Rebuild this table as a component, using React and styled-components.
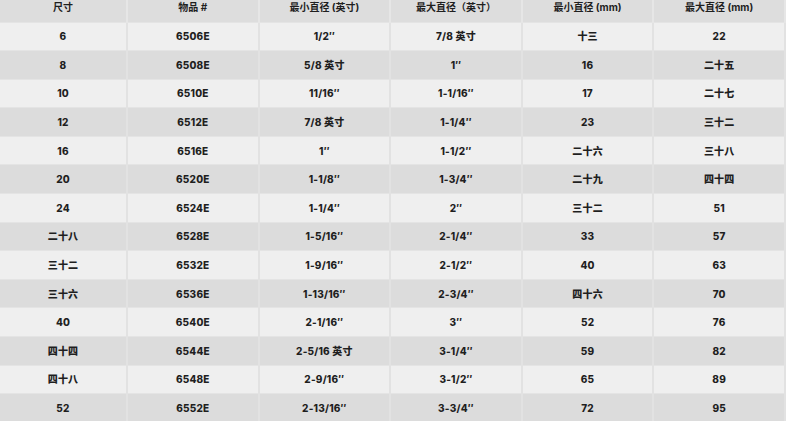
import styled, { createGlobalStyle } from "styled-components";

const GlobalStyle = createGlobalStyle`
  body {
    margin: 0;
    background: #ffffff;
    font-family: Inter, "Noto Sans CJK SC", sans-serif;
  }
`;

const headers = [
  "尺寸",
  "物品 #",
  "最小直径 (英寸)",
  "最大直径（英寸）",
  "最小直径 (mm)",
  "最大直径 (mm)",
];

const rows = [
  ["6", "6506E", "1/2″", "7/8 英寸", "十三", "22"],
  ["8", "6508E", "5/8 英寸", "1″", "16", "二十五"],
  ["10", "6510E", "11/16″", "1-1/16″", "17", "二十七"],
  ["12", "6512E", "7/8 英寸", "1-1/4″", "23", "三十二"],
  ["16", "6516E", "1″", "1-1/2″", "二十六", "三十八"],
  ["20", "6520E", "1-1/8″", "1-3/4″", "二十九", "四十四"],
  ["24", "6524E", "1-1/4″", "2″", "三十二", "51"],
  ["二十八", "6528E", "1-5/16″", "2-1/4″", "33", "57"],
  ["三十二", "6532E", "1-9/16″", "2-1/2″", "40", "63"],
  ["三十六", "6536E", "1-13/16″", "2-3/4″", "四十六", "70"],
  ["40", "6540E", "2-1/16″", "3″", "52", "76"],
  ["四十四", "6544E", "2-5/16 英寸", "3-1/4″", "59", "82"],
  ["四十八", "6548E", "2-9/16″", "3-1/2″", "65", "89"],
  ["52", "6552E", "2-13/16″", "3-3/4″", "72", "95"],
];

function App() {
  return (
    <>
      <GlobalStyle />
      <SizeTable>
        <colgroup>
          <col style={{ width: "127px" }} />
          <col />
          <col />
          <col />
          <col />
          <col />
        </colgroup>
        <thead>
          <tr>
            {headers.map((h) => (
              <HeadCell key={h}>{h}</HeadCell>
            ))}
          </tr>
        </thead>
        <tbody>
          {rows.map((r, i) => (
            <Row key={r[1]} $dark={i % 2 === 1}>
              {r.map((c, j) => (
                <Cell key={j}>{c}</Cell>
              ))}
            </Row>
          ))}
        </tbody>
      </SizeTable>
    </>
  );
}

export default App;

const SizeTable = styled.table`
  width: 786px;
  table-layout: fixed;
  border-collapse: collapse;
  color: #1f1f1f;
  font-size: 10px;
  font-weight: 800;
`;

const HeadCell = styled.th`
  height: 22px;
  padding: 0 0 7px;
  box-sizing: border-box;
  background: #dddddd;
  border-right: 2px solid #e6e6e6;
  text-align: center;
  vertical-align: top;
  line-height: 14px;
  font-weight: 700;
`;

const Row = styled.tr`
  background: ${(p) => (p.$dark ? "#dcdcdc" : "#efefef")};
  border-top: 1px solid #e4e4e4;
`;

const Cell = styled.td`
  height: 28.6px;
  padding: 0;
  box-sizing: border-box;
  text-align: center;
  vertical-align: middle;
  border-right: 2px solid #e2e2e2;
  line-height: 14px;
  letter-spacing: 0.2px;
`;
